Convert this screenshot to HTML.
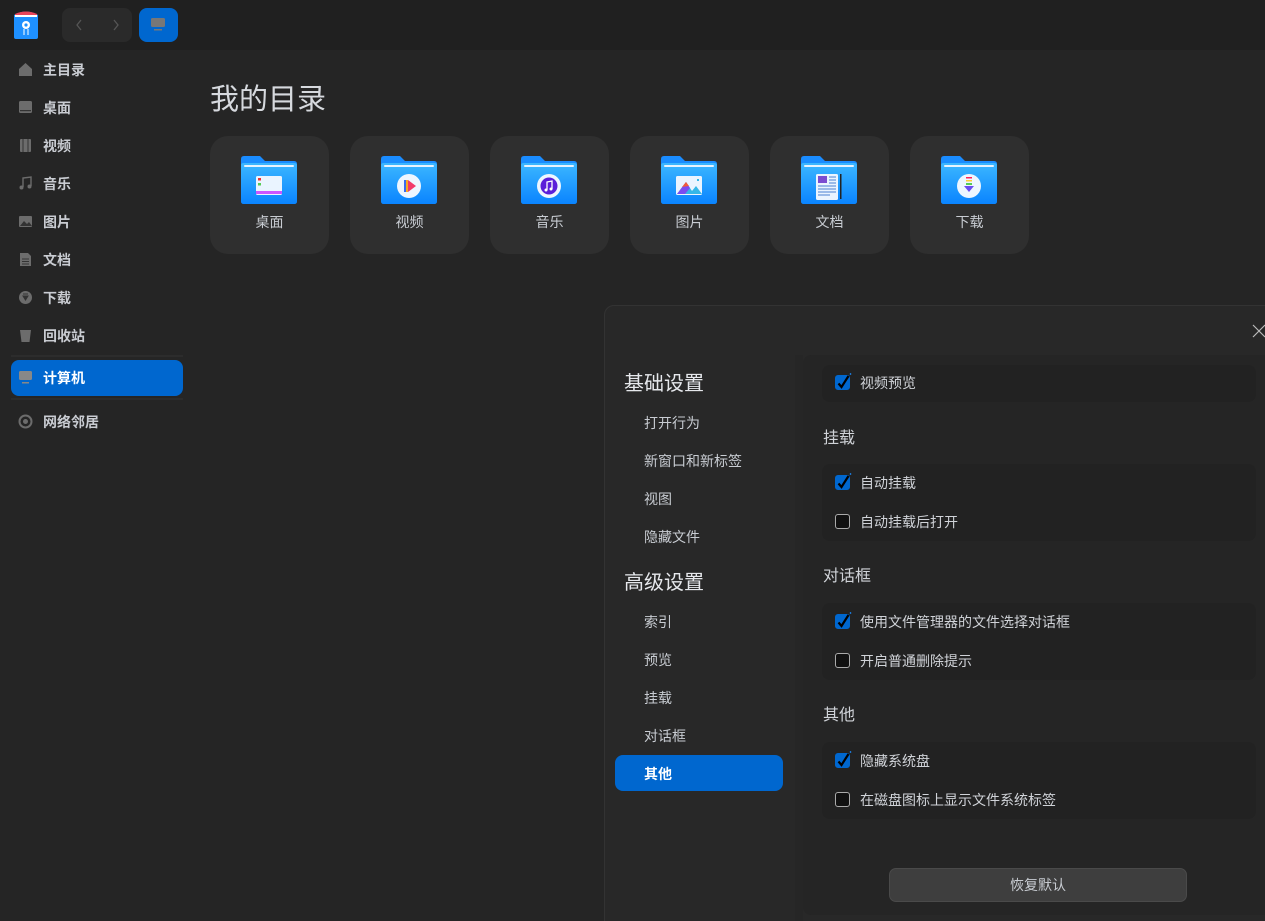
<!DOCTYPE html>
<html><head><meta charset="utf-8"><style>
*{box-sizing:border-box;margin:0;padding:0}
html,body{width:1265px;height:921px;overflow:hidden}
body{background:#252525;font-family:"Liberation Sans","Noto Sans CJK SC",sans-serif;color:#d0d3d8;position:relative}
.top{position:absolute;left:0;top:0;width:1265px;height:50px;background:#202020}
.abs{position:absolute}
.nav{position:absolute;left:0;width:200px;height:38px;font-size:14px;font-weight:bold;color:#c9ccd2}
.nav span{position:absolute;left:43px;top:9px}
.nav svg{position:absolute;left:18px;top:11px}
.card{position:absolute;top:136px;width:119px;height:118px;background:#2f2f2f;border-radius:18px}
.card .lbl{position:absolute;top:76px;width:100%;text-align:center;font-size:14px;color:#c8ccd2}
.card svg{position:absolute;left:31px;top:20px}
.dlg{position:absolute;left:604px;top:305px;width:680px;height:640px;background:#282828;border:1px solid #333;border-radius:10px}
.rp{position:absolute;left:803px;top:355px;width:470px;height:560px;background:#252525;border-radius:8px}
.lh{position:absolute;left:624px;font-size:20px;color:#e6e8ec}
.li{position:absolute;left:644px;font-size:14px;color:#c8ccd2}
.grp{position:absolute;left:822px;width:434px;background:#222;border-radius:8px}
.row{position:absolute;left:835px;font-size:14px;color:#d0d3d8;height:20px}
.row i{position:absolute;left:0;top:2px;width:15px;height:15px;border-radius:3px;border:1.5px solid #aaa;background:#111}
.row i.on{background:#0067cf;border-color:#0067cf}
.row i svg{position:absolute;left:-1px;top:-3px}
.row span{position:absolute;left:25px;top:0;white-space:nowrap}
.sh{position:absolute;left:823px;font-size:16px;color:#d0d3d8}
</style></head><body>
<div class="top"></div>
<svg class="abs" style="left:12px;top:9px" width="28" height="30" viewBox="0 0 28 30"><path d="M2 6 Q14 -1 26 6 L26 28 Q26 30 24 30 L4 30 Q2 30 2 28Z" fill="#1e90ff"/><path d="M3 5 Q14 0 25 5 L25 8 L3 8Z" fill="#e8455a"/><rect x="3" y="6" width="22" height="2" fill="#fff"/><circle cx="14" cy="16" r="4" fill="#fff"/><circle cx="14" cy="16" r="1.6" fill="#1e90ff"/><path d="M12 20v6M16 20v6" stroke="#fff" stroke-width="1"/></svg>
<div class="abs" style="left:62px;top:8px;width:70px;height:34px;background:#2a2a2a;border-radius:8px"></div>
<svg class="abs" style="left:74px;top:18px" width="10" height="14"><path d="M7 2L3 7l4 5" stroke="#555" stroke-width="1.3" fill="none"/></svg>
<svg class="abs" style="left:111px;top:18px" width="10" height="14"><path d="M3 2l4 5-4 5" stroke="#555" stroke-width="1.3" fill="none"/></svg>
<div class="abs" style="left:139px;top:8px;width:39px;height:34px;background:#0067cf;border-radius:8px"></div>
<svg class="abs" style="left:150px;top:18px" width="16" height="13"><rect x="1" y="0" width="14" height="9" rx="1.5" fill="#777"/><rect x="4" y="11" width="8" height="1.5" fill="#777"/></svg>

<div class="nav" style="top:51px"><svg width="15" height="15"><path d="M1 7L7.5 1 14 7V14H1Z" fill="#6c6c6c"/></svg><span>主目录</span></div>
<div class="nav" style="top:89px"><svg width="15" height="15"><rect x="1" y="1" width="13" height="12" rx="1.5" fill="#6c6c6c"/><rect x="2" y="10" width="11" height="1.2" fill="#333"/></svg><span>桌面</span></div>
<div class="nav" style="top:127px"><svg width="15" height="15"><rect x="2" y="1" width="11" height="13" rx="1" fill="#6c6c6c"/><path d="M5 1v13M10 1v13" stroke="#333"/></svg><span>视频</span></div>
<div class="nav" style="top:165px"><svg width="15" height="15"><path d="M5 11V2L13 1V10" stroke="#6c6c6c" stroke-width="1.4" fill="none"/><circle cx="3.5" cy="11.5" r="2" fill="#6c6c6c"/><circle cx="11.5" cy="10.5" r="2" fill="#6c6c6c"/></svg><span>音乐</span></div>
<div class="nav" style="top:203px"><svg width="15" height="15"><rect x="1" y="2" width="13" height="11" rx="1" fill="#6c6c6c"/><path d="M2 12l4-5 3 3 2-2 3 4Z" fill="#333"/></svg><span>图片</span></div>
<div class="nav" style="top:241px"><svg width="15" height="15"><path d="M2 1h8l3 3v10H2Z" fill="#6c6c6c"/><path d="M4 7h7M4 9.5h7M4 12h7" stroke="#333"/></svg><span>文档</span></div>
<div class="nav" style="top:279px"><svg width="15" height="15"><circle cx="7.5" cy="7.5" r="6.5" fill="#6c6c6c"/><path d="M5 6h5l-2.5 4Z M5 4h5" fill="#333" stroke="#333"/></svg><span>下载</span></div>
<div class="nav" style="top:317px"><svg width="15" height="15"><path d="M2 2h11l-1.5 12h-8Z" fill="#6c6c6c"/></svg><span>回收站</span></div>
<div class="abs" style="left:11px;top:355px;width:172px;height:2px;background:#2c2c2c"></div>
<div class="abs" style="left:11px;top:360px;width:172px;height:36px;background:#0067cf;border-radius:8px"></div>
<div class="nav" style="top:359px;color:#fff"><svg width="15" height="15"><rect x="1" y="1" width="13" height="9" rx="1.5" fill="#888"/><rect x="4" y="12" width="7" height="1.5" fill="#888"/></svg><span>计算机</span></div>
<div class="abs" style="left:11px;top:398px;width:172px;height:2px;background:#2c2c2c"></div>
<div class="nav" style="top:403px"><svg width="15" height="15"><circle cx="7.5" cy="7.5" r="6" fill="none" stroke="#6c6c6c" stroke-width="2"/><circle cx="7.5" cy="7.5" r="2.5" fill="#6c6c6c"/></svg><span>网络邻居</span></div>

<div class="abs" style="left:210px;top:76px;font-size:29px;color:#d6d9de">我的目录</div>

<svg width="0" height="0" style="position:absolute"><defs>
<linearGradient id="fg" x1="0" y1="0" x2="0" y2="1"><stop offset="0" stop-color="#3cb7ff"/><stop offset="1" stop-color="#0a84ff"/></linearGradient>
<symbol id="fold" viewBox="0 0 56 48"><path d="M3 0h16l5 5h29q3 0 3 3v37q0 3-3 3H3q-3 0-3-3V3q0-3 3-3Z" fill="#1a8cff"/><path d="M0 9q0-2 3-2h50q3 0 3 2v36q0 3-3 3H3q-3 0-3-3Z" fill="url(#fg)"/><rect x="3" y="9" width="50" height="2" rx="1" fill="#e6f3ff"/></symbol>
<symbol id="chk" viewBox="0 0 17 19"><path d="M3.5 10.5l3 3.5 7-11" stroke="#000" stroke-width="2.2" fill="none"/><path d="M15 1.5l1-1" stroke="#1a8cff" stroke-width="1.5"/></symbol>
</defs></svg>
<div class="card" style="left:210px"><svg width="56" height="48"><use href="#fold"/><rect x="15" y="20" width="26" height="19" rx="1.5" fill="#eaf4ff"/><rect x="17" y="22" width="3" height="2.5" fill="#e33"/><rect x="17" y="27" width="3" height="2.5" fill="#5c5"/><rect x="15" y="35" width="26" height="3" fill="#c5f"/></svg><div class="lbl">桌面</div></div>
<div class="card" style="left:350px"><svg width="56" height="48"><use href="#fold"/><circle cx="28" cy="30" r="12" fill="#eef6ff"/><rect x="23" y="24" width="4" height="12" fill="#3b6cf0"/><path d="M27 24l8 6-8 6Z" fill="#f23a6a"/><rect x="25" y="24" width="2" height="12" fill="#f9a825"/></svg><div class="lbl">视频</div></div>
<div class="card" style="left:490px"><svg width="56" height="48"><use href="#fold"/><circle cx="28" cy="30" r="12" fill="#eef6ff"/><circle cx="28" cy="30" r="8.5" fill="#5b1fd9"/><path d="M26 34V26l5-1v8" stroke="#fff" stroke-width="1.3" fill="none"/><circle cx="25" cy="34" r="1.5" fill="#fff"/><circle cx="30" cy="33" r="1.5" fill="#fff"/></svg><div class="lbl">音乐</div></div>
<div class="card" style="left:630px"><svg width="56" height="48"><use href="#fold"/><rect x="15" y="20" width="26" height="19" rx="1.5" fill="#eaf4ff"/><path d="M16 38l9-12 6 9 4-5 6 8Z" fill="#35b7e8"/><path d="M16 38l9-12 4 6-5 6Z" fill="#7b4cf0"/><path d="M21 31l4-5 3 4Z" fill="#f25b3a"/><rect x="36" y="23" width="2" height="2" fill="#35b7e8"/></svg><div class="lbl">图片</div></div>
<div class="card" style="left:770px"><svg width="56" height="48"><use href="#fold"/><rect x="15" y="18" width="22" height="26" rx="1.5" fill="#eaf4ff"/><rect x="17" y="20" width="9" height="7" fill="#7b4cd0"/><path d="M28 21h7M28 24h7M28 27h7M17 30h18M17 33h18M17 36h18M17 39h12" stroke="#4a7fd0" stroke-width="1"/><rect x="39" y="18" width="1.5" height="25" fill="#222"/></svg><div class="lbl">文档</div></div>
<div class="card" style="left:910px"><svg width="56" height="48"><use href="#fold"/><circle cx="28" cy="30" r="12" fill="#eef6ff"/><rect x="25" y="21" width="6" height="1.5" fill="#f25"/><rect x="25" y="24" width="6" height="1.5" fill="#fc3"/><rect x="25" y="27" width="6" height="2" fill="#5c5"/><path d="M23 30h10l-5 6Z" fill="#6a4cf0"/></svg><div class="lbl">下载</div></div>

<div class="dlg"></div>
<svg class="abs" style="left:1252px;top:324px" width="14" height="14"><path d="M1 1l12 12M13 1L1 13" stroke="#bbb" stroke-width="1.2"/></svg>
<div class="abs" style="left:795px;top:355px;width:8px;height:566px;background:#262626"></div>
<div class="rp"></div>

<div class="lh" style="top:367px">基础设置</div>
<div class="li" style="top:413px">打开行为</div>
<div class="li" style="top:451px">新窗口和新标签</div>
<div class="li" style="top:489px">视图</div>
<div class="li" style="top:527px">隐藏文件</div>
<div class="lh" style="top:566px">高级设置</div>
<div class="li" style="top:612px">索引</div>
<div class="li" style="top:650px">预览</div>
<div class="li" style="top:688px">挂载</div>
<div class="li" style="top:726px">对话框</div>
<div class="abs" style="left:615px;top:755px;width:168px;height:36px;background:#0067cf;border-radius:8px"></div>
<div class="li" style="top:764px;color:#fff;font-weight:bold">其他</div>

<div class="grp" style="top:365px;height:37px"></div>
<div class="row" style="top:373px"><i class="on"><svg width="17" height="19"><use href="#chk"/></svg></i><span>视频预览</span></div>
<div class="sh" style="top:424px">挂载</div>
<div class="grp" style="top:464px;height:77px"></div>
<div class="row" style="top:473px"><i class="on"><svg width="17" height="19"><use href="#chk"/></svg></i><span>自动挂载</span></div>
<div class="row" style="top:512px"><i></i><span>自动挂载后打开</span></div>
<div class="sh" style="top:562px">对话框</div>
<div class="grp" style="top:603px;height:77px"></div>
<div class="row" style="top:612px"><i class="on"><svg width="17" height="19"><use href="#chk"/></svg></i><span>使用文件管理器的文件选择对话框</span></div>
<div class="row" style="top:651px"><i></i><span>开启普通删除提示</span></div>
<div class="sh" style="top:701px">其他</div>
<div class="grp" style="top:742px;height:77px"></div>
<div class="row" style="top:751px"><i class="on"><svg width="17" height="19"><use href="#chk"/></svg></i><span>隐藏系统盘</span></div>
<div class="row" style="top:790px"><i></i><span>在磁盘图标上显示文件系统标签</span></div>

<div class="abs" style="left:889px;top:868px;width:298px;height:34px;background:#3e3e3e;border:1px solid #4a4a4a;border-radius:7px;text-align:center;line-height:32px;font-size:14px;color:#c8ccd2">恢复默认</div>
</body></html>
